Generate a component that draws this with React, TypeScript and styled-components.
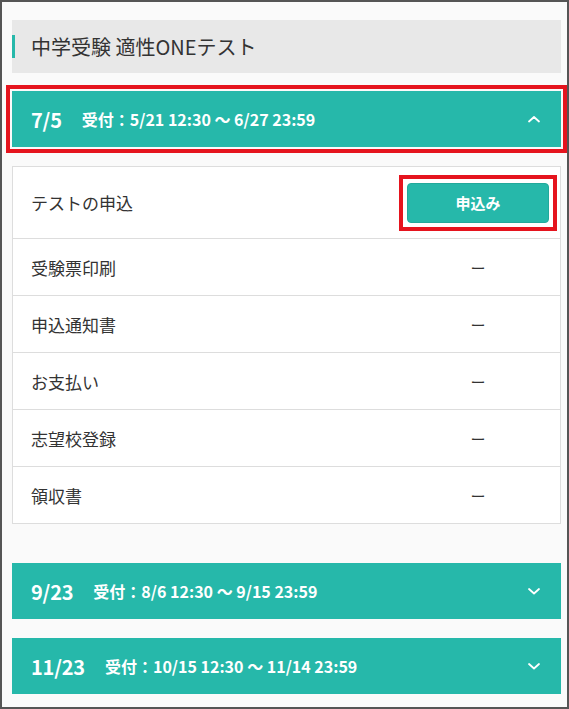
import React from 'react';
import styled, { createGlobalStyle } from 'styled-components';

const Global = createGlobalStyle`
  html, body {
    margin: 0;
    padding: 0;
  }
  body {
    font-family: "Noto Sans CJK JP", "Noto Sans", sans-serif;
    color: #333;
  }
`;

const Frame = styled.div`
  box-sizing: border-box;
  width: 569px;
  height: 709px;
  border: 2px solid #555;
  background: #fafafa;
  padding: 18px 6px 0 10px;
  overflow: hidden;
`;

const Title = styled.h1`
  display: flex;
  align-items: center;
  height: 53px;
  margin: 0 0 18px;
  background: #e8e8e8;
  font-size: 20px;
  font-weight: 400;
  color: #333;
  padding-left: 19px;
  position: relative;
  &::before {
    content: '';
    position: absolute;
    left: 0;
    top: 15px;
    width: 3px;
    height: 23px;
    background: #26b8aa;
  }
`;

const Item = styled.section`
  margin-bottom: 19px;
`;

const Header = styled.div<{ $marked?: boolean }>`
  display: flex;
  align-items: center;
  height: 56px;
  background: #26b8aa;
  color: #fff;
  padding: 0 20px 0 19px;
  font-weight: 700;
  outline: ${(p) => (p.$marked ? '4px solid #e5141e' : 'none')};
  outline-offset: 2px;
`;

const Day = styled.span`
  font-size: 20px;
  margin-right: 20px;
  letter-spacing: -0.2px;
`;

const Period = styled.span`
  font-size: 16px;
  flex: 1;
`;

const Chevron = ({ up }: { up?: boolean }) => (
  <svg width="14" height="10" viewBox="0 0 14 10" fill="none">
    <path
      d={up ? 'M2 7.5 L7 3 L12 7.5' : 'M2 3 L7 7.5 L12 3'}
      stroke="#fff"
      strokeWidth="1.8"
      strokeLinecap="round"
      strokeLinejoin="round"
    />
  </svg>
);

const Panel = styled.ul`
  list-style: none;
  margin: 19px 0 39px;
  padding: 0;
  background: #fff;
  border: 1px solid #ddd;
`;

const Row = styled.li<{ $tall?: boolean }>`
  display: flex;
  align-items: center;
  height: ${(p) => (p.$tall ? '71px' : '56px')};
  padding: 0 3px 0 18px;
  font-size: 17px;
  color: #333;
  & + & {
    border-top: 1px solid #ddd;
  }
`;

const Label = styled.span`
  flex: 1;
`;

const Status = styled.span`
  width: 142px;
  margin-right: 8px;
  text-align: center;
  font-size: 15px;
`;

const Mark = styled.span`
  display: inline-flex;
  border: 4px solid #e5141e;
  padding: 4px;
  background: #fff;
`;

const ApplyButton = styled.button`
  width: 142px;
  height: 40px;
  border: 1px solid #22a99b;
  border-radius: 4px;
  background: #26b8aa;
  color: #fff;
  font-family: inherit;
  font-size: 15px;
  font-weight: 700;
  cursor: pointer;
`;

const steps = ['受験票印刷', '申込通知書', 'お支払い', '志望校登録', '領収書'];

const others = [
  { day: '9/23', period: '受付：8/6 12:30 〜 9/15 23:59' },
  { day: '11/23', period: '受付：10/15 12:30 〜 11/14 23:59' },
];

export default function App() {
  return (
    <>
      <Global />
      <Frame>
        <Title>中学受験 適性ONEテスト</Title>
        <Item>
          <Header $marked>
            <Day>7/5</Day>
            <Period>受付：5/21 12:30 〜 6/27 23:59</Period>
            <Chevron up />
          </Header>
          <Panel>
            <Row $tall>
              <Label>テストの申込</Label>
              <Mark>
                <ApplyButton>申込み</ApplyButton>
              </Mark>
            </Row>
            {steps.map((s) => (
              <Row key={s}>
                <Label>{s}</Label>
                <Status>ー</Status>
              </Row>
            ))}
          </Panel>
        </Item>
        {others.map((o) => (
          <Item key={o.day}>
            <Header>
              <Day>{o.day}</Day>
              <Period>{o.period}</Period>
              <Chevron />
            </Header>
          </Item>
        ))}
      </Frame>
    </>
  );
}
